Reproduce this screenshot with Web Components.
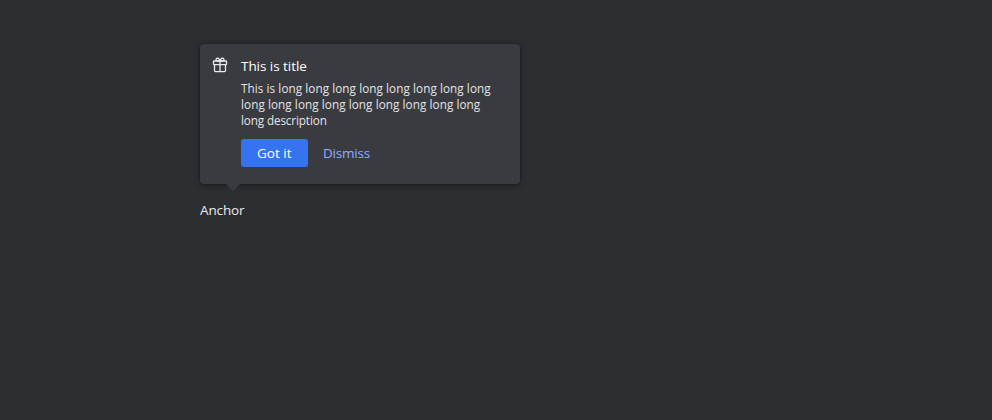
<!DOCTYPE html>
<html lang="en">
<head>
<meta charset="utf-8">
<title>Promo bubble</title>
<style>
html { background: #2d2e31; }
body { margin: 0; padding: 44px 200px 0; font: 13.5px/20px "Open Sans", "Noto Sans", sans-serif; color: #e8eaed; }
</style>
</head>
<body>
<bubble-demo></bubble-demo>
<script>
const define = (name, html) => customElements.define(name, class extends HTMLElement {
  constructor() { super(); this.attachShadow({ mode: 'open' }).innerHTML = html; }
});
define('gift-icon', `<style>:host{display:block;width:16px;height:16px}svg{display:block}</style>
<svg width="16" height="16" viewBox="0 0 16 16" fill="none" stroke="#e9eaec" stroke-width="1.3">
<rect x="1.5" y="4" width="13" height="3.6" rx=".7"/><path d="M2.5 7.6v6q0 1 1 1h9q1 0 1-1v-6M8 4v10.6M8 4H5.2Q3.9 3.5 4 2.4 4.2 1.1 5.6 1.1 7.3 1.2 8 4q.7-2.8 2.4-2.9 1.4 0 1.6 1.3.1 1.1-1.2 1.6H8"/></svg>`);
define('action-button', `<style>
:host{display:block} button{display:block;margin:0;border:0;box-sizing:border-box;min-width:67px;padding:0 15px 0 16px;height:28px;border-radius:3px;background:#3574f0;color:#fff;font:inherit;line-height:28px;letter-spacing:var(--track,0);white-space:nowrap;text-align:left}
:host([quiet]) button{background:none;color:#8ab0ff;padding-left:15px}</style><button><slot></slot></button>`);
define('promo-bubble', `<style>
:host{display:flex;position:relative;box-sizing:border-box;width:320px;height:140px;padding:13px 12px 0;gap:13px;background:#3a3b40;border-radius:4px;box-shadow:0 1px 6px rgba(0,0,0,.4),0 0 2px rgba(0,0,0,.25)}
:host::after{content:"";position:absolute;left:26px;top:140px;border:7px solid transparent;border-bottom:0;border-top-color:#3a3b40}
gift-icon{flex:none}
.title{height:20px;line-height:20px;margin-top:-1px;color:#fff;letter-spacing:-.05px;white-space:nowrap}
.desc{font-size:11.7px;line-height:16px;height:48px;margin-top:4px;letter-spacing:.08px;white-space:pre;color:#e3e4e6}
.actions{display:flex;margin-top:11px}
</style><gift-icon></gift-icon><div><div class="title"><slot name="title"></slot></div><div class="desc"><slot></slot></div><div class="actions"><slot name="actions"></slot></div></div>`);
define('bubble-demo', `<style>:host{display:block}
.anchor{margin-top:16px;letter-spacing:-.12px}
.tail{letter-spacing:-.12px}
[quiet]{--track:-.2px}</style>
<promo-bubble><span slot="title">This is title</span>This is long long long long long long long long<br>long long long long long long long long long<br><span class="tail">long description</span><action-button slot="actions">Got it</action-button><action-button slot="actions" quiet>Dismiss</action-button></promo-bubble><div class="anchor">Anchor</div>`);
</script>
</body>
</html>
